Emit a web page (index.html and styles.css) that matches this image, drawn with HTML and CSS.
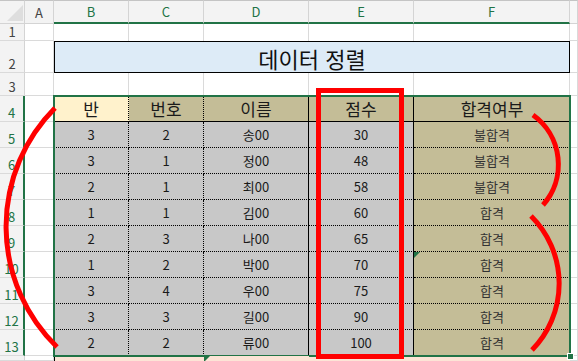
FILE: index.html
```html
<!DOCTYPE html>
<html lang="ko">
<head>
<meta charset="utf-8">
<title>데이터 정렬</title>
<link rel="stylesheet" href="styles.css">
</head>
<body>
<div class="sheet">
  <div class="corner"><svg width="25" height="24" viewBox="0 0 25 24"><polygon points="7,21 23,21 23,5" fill="#dedede"/></svg></div>
  <div class="ch">A</div>
  <div class="ch sel">B</div>
  <div class="ch sel">C</div>
  <div class="ch sel">D</div>
  <div class="ch sel">E</div>
  <div class="ch sel">F</div>
  <div class="ch rest"></div>

  <div class="rh">1</div>
  <div class="c"></div>
  <div class="c nb"></div><div class="c nb"></div><div class="c nb"></div><div class="c nb"></div><div class="c nb"></div>
  <div class="c"></div>

  <div class="rh">2</div>
  <div class="c"></div>
  <div class="title">데이터 정렬</div>
  <div class="c"></div>

  <div class="rh">3</div>
  <div class="c"></div>
  <div class="c"></div><div class="c"></div><div class="c"></div><div class="c"></div><div class="c"></div>
  <div class="c"></div>

  <div class="table">
    <div class="t th yel dot">반</div>
    <div class="t th tan dot">번호</div>
    <div class="t th tan sol">이름</div>
    <div class="t th tan sol">점수</div>
    <div class="t th tan">합격여부</div>

    <div class="t gr dot">3</div><div class="t gr dot">2</div><div class="t gr sol">송00</div><div class="t gr sol">30</div><div class="t tan f">불합격</div>
    <div class="t gr dot">3</div><div class="t gr dot">1</div><div class="t gr sol">정00</div><div class="t gr sol">48</div><div class="t tan f">불합격</div>
    <div class="t gr dot">2</div><div class="t gr dot">1</div><div class="t gr sol">최00</div><div class="t gr sol">58</div><div class="t tan f">불합격</div>
    <div class="t gr dot">1</div><div class="t gr dot">1</div><div class="t gr sol">김00</div><div class="t gr sol">60</div><div class="t tan f">합격</div>
    <div class="t gr dot">2</div><div class="t gr dot">3</div><div class="t gr sol">나00</div><div class="t gr sol">65</div><div class="t tan f">합격</div>
    <div class="t gr dot">1</div><div class="t gr dot">2</div><div class="t gr sol">박00</div><div class="t gr sol">70</div><div class="t tan f err">합격</div>
    <div class="t gr dot">3</div><div class="t gr dot">4</div><div class="t gr sol">우00</div><div class="t gr sol">75</div><div class="t tan f">합격</div>
    <div class="t gr dot">3</div><div class="t gr dot">3</div><div class="t gr sol">길00</div><div class="t gr sol">90</div><div class="t tan f">합격</div>
    <div class="t gr dot">2</div><div class="t gr dot">2</div><div class="t gr sol">류00</div><div class="t gr sol">100</div><div class="t tan f">합격</div>
    <div class="handle"></div>
  </div>

  <div class="rh sel">4</div><div class="c"></div><div class="c"></div>
  <div class="rh sel">5</div><div class="c"></div><div class="c"></div>
  <div class="rh sel">6</div><div class="c"></div><div class="c"></div>
  <div class="rh sel">7</div><div class="c"></div><div class="c"></div>
  <div class="rh sel">8</div><div class="c"></div><div class="c"></div>
  <div class="rh sel">9</div><div class="c"></div><div class="c"></div>
  <div class="rh sel">10</div><div class="c"></div><div class="c"></div>
  <div class="rh sel">11</div><div class="c"></div><div class="c"></div>
  <div class="rh sel">12</div><div class="c"></div><div class="c"></div>
  <div class="rh sel">13</div><div class="c"></div><div class="c"></div>

  <div class="rh"></div>
  <div class="c"></div>
  <div class="pink first"></div><div class="pink"></div><div class="pink err"></div><div class="pink"></div><div class="pink"></div>
  <div class="c"></div>

  <svg class="marks" width="578" height="361" viewBox="0 0 578 361">
    <rect x="318.5" y="90.5" width="83" height="266" fill="none" stroke="#ff0000" stroke-width="5"/>
    <path d="M55,108 A168,168 0 0 0 57,347" fill="none" stroke="#ff0000" stroke-width="5"/>
    <path d="M533,115 A61,61 0 0 1 543,205" fill="none" stroke="#ff0000" stroke-width="5"/>
    <path d="M531,216 A95,95 0 0 1 532,350" fill="none" stroke="#ff0000" stroke-width="5"/>
  </svg>
</div>
</body>
</html>
```
FILE: styles.css
```css
html, body {
  margin: 0;
  padding: 0;
  background: #ffffff;
}

.sheet {
  position: relative;
  display: grid;
  grid-template-columns: 25px 29px 75px 75px 105px 105px 156px 1fr;
  grid-template-rows: 24px 17px 32px 23px repeat(10, 26px) 1fr;
  width: 578px;
  height: 361px;
  overflow: hidden;
  font-family: "Noto Sans CJK KR", "Noto Sans", sans-serif;
}

.c {
  box-sizing: border-box;
  border-right: 1px solid #dadada;
  border-bottom: 1px solid #dadada;
}

.c.nb {
  border-bottom: none;
}

.corner {
  box-sizing: border-box;
  background: #f3f3f3;
  border-top: 1px solid #c4c4c4;
  border-right: 1px solid #d4d4d4;
  border-bottom: 1px solid #d4d4d4;
  overflow: hidden;
}

.corner svg {
  display: block;
  margin-top: -1px;
}

.ch {
  box-sizing: border-box;
  background: #f3f3f3;
  border-top: 1px solid #c4c4c4;
  border-right: 1px solid #d4d4d4;
  border-bottom: 1px solid #d4d4d4;
  display: flex;
  align-items: center;
  justify-content: center;
  font-size: 13px;
  color: #444444;
  line-height: 1;
}

.ch.sel {
  color: #217346;
  border-bottom: 2px solid #217346;
}

.ch.rest {
  background: #f7f7f7;
}

.rh {
  box-sizing: border-box;
  background: #f3f3f3;
  border-right: 1px solid #d4d4d4;
  border-bottom: 1px solid #dadada;
  display: flex;
  align-items: flex-end;
  justify-content: center;
  padding-bottom: 2px;
  font-size: 13px;
  line-height: 1;
  color: #444444;
}

.rh.sel {
  color: #217346;
  border-right: 2px solid #217346;
}

.title {
  grid-column: 3 / 8;
  box-sizing: border-box;
  background: #ddebf7;
  border: 1px solid #000000;
  display: flex;
  align-items: center;
  justify-content: center;
  font-size: 22px;
  color: #111111;
  padding-top: 1px;
}

.table {
  grid-column: 3 / 8;
  grid-row: 5 / 15;
  position: relative;
  display: grid;
  grid-template-columns: 75px 75px 105px 105px 156px;
  grid-template-rows: repeat(10, 26px);
}

.table::after {
  content: "";
  position: absolute;
  left: -1px;
  top: -1px;
  right: -1px;
  bottom: -1px;
  border: 2px solid #217346;
  pointer-events: none;
}

.handle {
  position: absolute;
  right: -4px;
  bottom: -4px;
  width: 5px;
  height: 5px;
  background: #217346;
  border: 1px solid #ffffff;
  z-index: 2;
}

.t {
  box-sizing: border-box;
  display: flex;
  align-items: center;
  justify-content: center;
  font-size: 13px;
  color: #1a1a1a;
  border-bottom: 1px dotted #000000;
}

.th {
  font-size: 17px;
  border-bottom: 1px solid #000000;
}

.dot {
  border-right: 1px dotted #000000;
}

.sol {
  border-right: 1px solid #000000;
}

.yel {
  background: #fff2cc;
}

.tan {
  background: #c4bd97;
}

.gr {
  background: #c8c8c8;
}

.f {
  color: #333333;
}

.err {
  position: relative;
}

.err::before {
  content: "";
  position: absolute;
  left: 0;
  top: 0;
  border-top: 6px solid #217346;
  border-right: 6px solid transparent;
}

.pink {
  background: #fce4d6;
}

.pink.first {
  border-left: 1px solid #000000;
}

.marks {
  position: absolute;
  left: 0;
  top: 0;
  pointer-events: none;
}
```
